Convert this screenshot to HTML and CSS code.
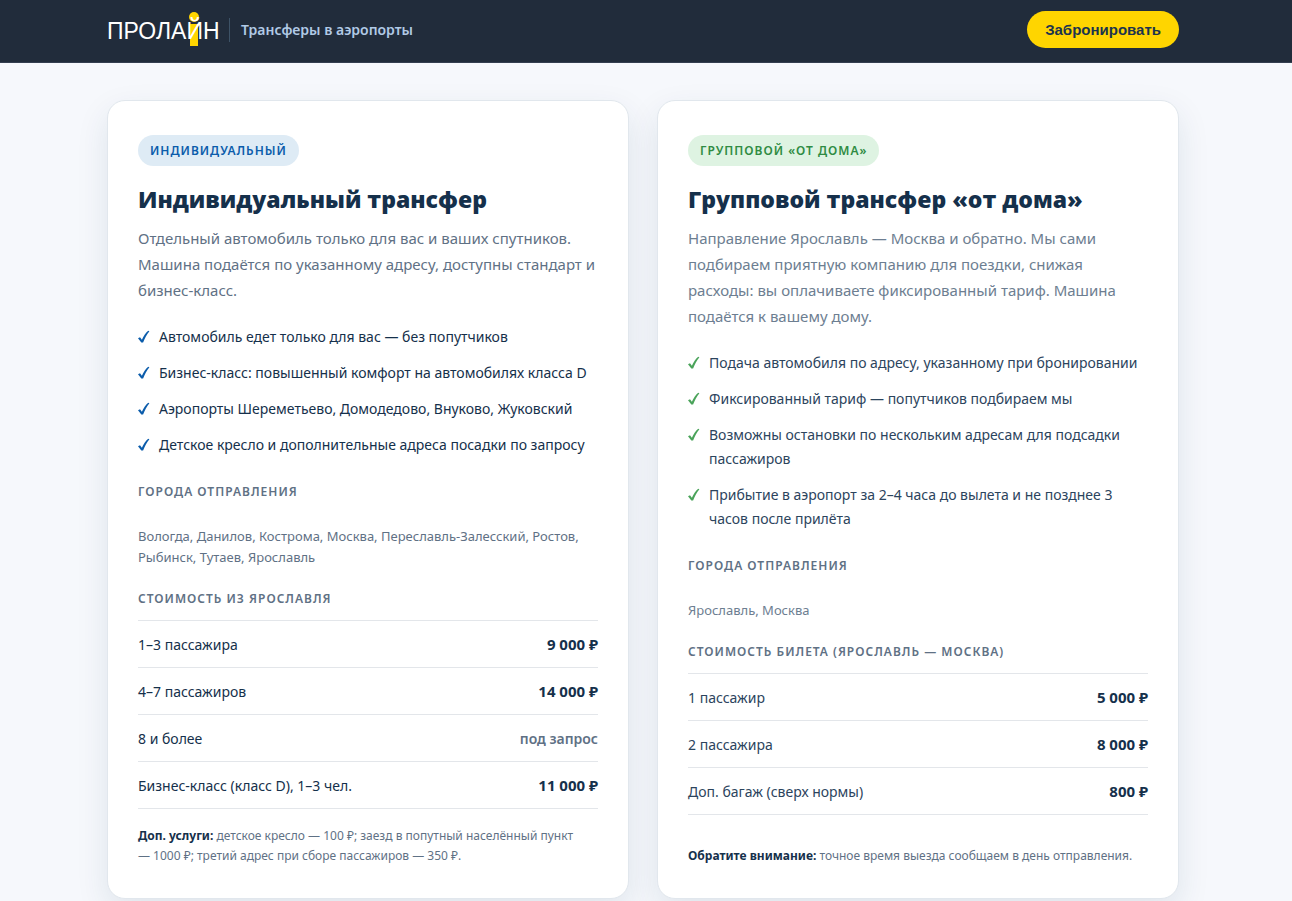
FILE: index.html
```html
<!DOCTYPE html>
<html lang="ru">
<head>
<meta charset="utf-8">
<meta name="viewport" content="width=device-width, initial-scale=1">
<title>Пролайн — трансферы в аэропорты</title>
<link rel="stylesheet" href="styles.css">
</head>
<body>
<svg class="sprite" aria-hidden="true">
  <symbol id="check" viewBox="0 0 12 14"><path d="M0 8.300 2 7.200 3.900 9.800C5.400 6.200 7.600 3 10.200.800L11.400 1.300C8.800 4.600 6.700 8.400 5.100 12.600H3.300Z"/></symbol>
</svg>
<header class="header">
  <div class="container header__inner">
    <div class="brand">
      <a class="brand__logo" href="#" aria-label="Пролайн">
        <svg width="114" height="36" viewBox="0 0 114 36" aria-hidden="true">
          <circle cx="87" cy="5" r="5"/>
          <rect x="83" y="12" width="8" height="22"/>
          <text x="0" y="27">ПРОЛАЙН</text>
        </svg>
      </a>
      <span class="brand__tagline">Трансферы в аэропорты</span>
    </div>
    <button class="button" type="button">Забронировать</button>
  </div>
</header>

<main class="container cards">
  <article class="card card--individual">
    <span class="badge">Индивидуальный</span>
    <h2 class="card__title">Индивидуальный трансфер</h2>
    <p class="card__text">Отдельный автомобиль только для вас и ваших спутников. Машина подаётся по указанному адресу, доступны стандарт и бизнес-класс.</p>
    <ul class="features">
      <li><svg class="check"><use href="#check"/></svg><span>Автомобиль едет только для вас — без попутчиков</span></li>
      <li><svg class="check"><use href="#check"/></svg><span>Бизнес-класс: повышенный комфорт на автомобилях класса D</span></li>
      <li><svg class="check"><use href="#check"/></svg><span>Аэропорты Шереметьево, Домодедово, Внуково, Жуковский</span></li>
      <li><svg class="check"><use href="#check"/></svg><span>Детское кресло и дополнительные адреса посадки по запросу</span></li>
    </ul>
    <h3 class="label">Города отправления</h3>
    <p class="cities">Вологда, Данилов, Кострома, Москва, Переславль-Залесский, Ростов, Рыбинск, Тутаев, Ярославль</p>
    <h3 class="label" id="price-individual">Стоимость из Ярославля</h3>
    <table class="prices" aria-labelledby="price-individual">
      <tr><td>1–3 пассажира</td><td class="price">9 000 ₽</td></tr>
      <tr><td>4–7 пассажиров</td><td class="price">14 000 ₽</td></tr>
      <tr><td>8 и более</td><td class="price price--request">под запрос</td></tr>
      <tr><td>Бизнес-класс (класс D), 1–3 чел.</td><td class="price">11 000 ₽</td></tr>
    </table>
    <p class="note"><strong>Доп. услуги:</strong> детское кресло — 100 ₽; заезд в попутный населённый пункт —&nbsp;1000 ₽; третий адрес при сборе пассажиров — 350 ₽.</p>
  </article>

  <article class="card card--group">
    <span class="badge">Групповой «от дома»</span>
    <h2 class="card__title">Групповой трансфер «от дома»</h2>
    <p class="card__text">Направление Ярославль — Москва и обратно. Мы сами подбираем приятную компанию для поездки, снижая расходы: вы оплачиваете фиксированный тариф. Машина подаётся к вашему дому.</p>
    <ul class="features">
      <li><svg class="check"><use href="#check"/></svg><span>Подача автомобиля по адресу, указанному при бронировании</span></li>
      <li><svg class="check"><use href="#check"/></svg><span>Фиксированный тариф — попутчиков подбираем мы</span></li>
      <li><svg class="check"><use href="#check"/></svg><span>Возможны остановки по нескольким адресам для подсадки пассажиров</span></li>
      <li><svg class="check"><use href="#check"/></svg><span>Прибытие в аэропорт за 2–4 часа до вылета и не позднее 3 часов после прилёта</span></li>
    </ul>
    <h3 class="label">Города отправления</h3>
    <p class="cities">Ярославль, Москва</p>
    <h3 class="label" id="price-group">Стоимость билета (Ярославль — Москва)</h3>
    <table class="prices" aria-labelledby="price-group">
      <tr><td>1 пассажир</td><td class="price">5 000 ₽</td></tr>
      <tr><td>2 пассажира</td><td class="price">8 000 ₽</td></tr>
      <tr><td>Доп. багаж (сверх нормы)</td><td class="price">800 ₽</td></tr>
    </table>
    <p class="note"><strong>Обратите внимание:</strong> точное время выезда сообщаем в день отправления.</p>
  </article>
</main>
</body>
</html>
```
FILE: styles.css
```css
*, *::before, *::after { box-sizing: border-box; }

:root {
  --ink: #15304b;
  --muted: #5f7185;
  --line: #e3e6ea;
  --accent: #0b5cab;
  --yellow: #ffd500;
}

body {
  margin: 0;
  padding-right: 6px;
  background: #f6f8fc;
  color: var(--ink);
  font-family: "Noto Sans", "Open Sans", sans-serif;
  font-size: 14px;
}

h2, h3, p, ul { margin: 0; }
ul { padding: 0; list-style: none; }

.sprite { position: absolute; width: 0; height: 0; }

.container {
  width: 100%;
  max-width: 1112px;
  margin: 0 auto;
  padding: 0 20px;
}

.header {
  margin-right: -6px;
  padding: 11px 6px 14px 0;
  background: #212c3b;
  border-bottom: 1px solid #343f50;
}

.header__inner {
  display: flex;
  align-items: center;
  justify-content: space-between;
}

.brand { display: flex; align-items: center; gap: 8px; }
.brand__logo { display: flex; }
.brand__logo svg { overflow: visible; }
.brand__logo circle, .brand__logo rect { fill: var(--yellow); }
.brand__logo text {
  fill: #fff;
  font-family: "Liberation Sans", Arial, sans-serif;
  font-size: 23px;
}
.brand__tagline {
  padding-left: 11px;
  border-left: 1px solid #3d5266;
  color: #b1cae6;
  font-weight: 600;
  line-height: 24px;
}

.button {
  height: 37px;
  padding: 0 18px;
  border: 0;
  border-radius: 19px;
  background: var(--yellow);
  color: #1b344e;
  font: bold 15px "Liberation Sans", Arial, sans-serif;
  cursor: pointer;
}

.cards {
  display: grid;
  grid-template-columns: repeat(auto-fit, minmax(400px, 1fr));
  gap: 28px;
  padding-top: 37px;
  padding-bottom: 40px;
}

.card {
  display: flex;
  flex-direction: column;
  padding: 34px 30px 32px;
  background: #fff;
  border: 1px solid #e1e7ed;
  border-radius: 18px;
  box-shadow: 0 12px 32px rgba(21, 60, 90, 0.1);
}

.badge {
  align-self: flex-start;
  padding: 0 12px;
  border-radius: 16px;
  background: #deebf5;
  color: var(--accent);
  font-size: 12px;
  font-weight: 600;
  line-height: 31px;
  letter-spacing: 1px;
  text-transform: uppercase;
}

.card__title {
  margin-top: 17px;
  font-family: "Open Sans", "Noto Sans", sans-serif;
  font-size: 23px;
  font-weight: 800;
  line-height: 32px;
}

.card__text {
  margin-top: 10px;
  color: var(--muted);
  font-size: 15px;
  line-height: 26px;
}

.features {
  display: grid;
  gap: 12px;
  margin-top: 22px;
  line-height: 24px;
}
.features li { display: flex; gap: 9px; }
.check {
  flex: none;
  width: 12px;
  height: 14px;
  margin-top: 5px;
  fill: var(--accent);
}

.label {
  margin-top: 25px;
  color: var(--muted);
  font-size: 12px;
  font-weight: 600;
  line-height: 20px;
  letter-spacing: 1px;
  text-transform: uppercase;
}

.cities {
  margin-top: 24px;
  color: var(--muted);
  font-size: 13px;
  line-height: 21px;
}
.cities + .label { margin-top: 21px; }

.prices {
  width: 100%;
  margin-top: 11px;
  border-collapse: collapse;
  border-top: 1px solid var(--line);
}
.prices td {
  height: 47px;
  padding: 0;
  border-bottom: 1px solid var(--line);
}
.prices .price { font-size: 15px; font-weight: 700; text-align: right; white-space: nowrap; }
.prices .price--request { color: var(--muted); font-size: 14px; font-weight: 600; }

.note {
  margin-top: auto;
  padding-top: 17px;
  color: var(--muted);
  font-size: 12px;
  line-height: 20px;
}
.note strong { color: var(--ink); }

.card--group .badge { background: #def3e2; color: #2f8b43; }
.card--group .check { fill: #4aa35a; }
.card--group .features, .card--group .prices { color: #2c445d; }
.card--group .price { color: var(--ink); }
.card--group .card__text, .card--group .cities { color: #6d7e91; }
```
